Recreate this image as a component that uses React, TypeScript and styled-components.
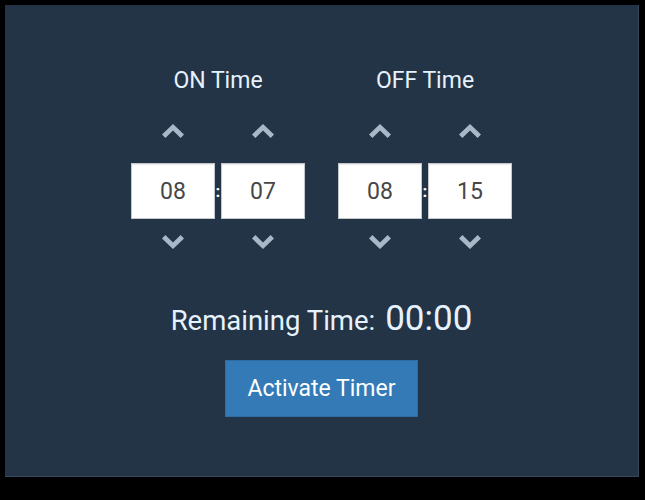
import * as React from 'react'
import styled, { createGlobalStyle } from 'styled-components'

const GlobalStyle = createGlobalStyle`
  html, body {
    margin: 0;
    padding: 0;
    background: #000;
  }
  body {
    font-family: Roboto, "Liberation Sans", Arial, sans-serif;
  }
`

const Panel = styled.div`
  margin: 5px 0 0 5px;
  width: 633px;
  height: 411px;
  padding-top: 60px;
  background: #233446;
  border-right: 1px solid #34475b;
  border-bottom: 1px solid #34475b;
  display: flex;
  flex-direction: column;
  align-items: center;
`

const Pickers = styled.div`
  display: flex;
  gap: 33px;
`

const Group = styled.div`
  display: flex;
  flex-direction: column;
  align-items: center;
`

const Title = styled.h2`
  margin: 0;
  font-size: 23px;
  font-weight: 400;
  line-height: 32px;
  color: #e6f2fd;
`

const Fields = styled.div`
  display: flex;
  margin-top: 27px;
`

const Unit = styled.div`
  display: flex;
  flex-direction: column;
  align-items: center;
  width: 84px;
`

const Arrow = styled.button<{ $down?: boolean }>`
  border: 0;
  padding: 0;
  background: none;
  width: 22px;
  height: 14px;
  cursor: pointer;
  margin-top: ${p => (p.$down ? '16px' : '0')};
  margin-bottom: ${p => (p.$down ? '0' : '25px')};
  svg {
    display: block;
  }
`

const Field = styled.div`
  width: 84px;
  height: 56px;
  box-sizing: border-box;
  background: #fff;
  border: 1px solid #c4c8cc;
  box-shadow: inset 0 1px 1px rgba(0, 0, 0, 0.08);
  display: flex;
  align-items: center;
  justify-content: center;
  font-size: 23px;
  color: #474747;
`

const Colon = styled.span`
  width: 6px;
  height: 56px;
  margin-top: 39px;
  display: flex;
  align-items: center;
  justify-content: center;
  color: #fff;
  font-size: 17px;
  font-weight: 700;
`

const Remaining = styled.div`
  margin-top: 50px;
  display: flex;
  align-items: baseline;
  gap: 10px;
  color: #e6f2fd;
  font-size: 27.5px;
  line-height: 40px;
`

const Clock = styled.span`
  font-size: 35px;
`

const ActivateButton = styled.button`
  margin-top: 19px;
  width: 193px;
  height: 57px;
  background: #337ab7;
  border: 1px solid #2e6da4;
  color: #fff;
  font-family: inherit;
  font-size: 23px;
  cursor: pointer;
`

function Chevron({ down }: { down?: boolean }) {
  return (
    <svg width="22" height="14" viewBox="0 0 22 14">
      <path
        d="M11 0 L22 10.5 L18.6 14 L11 6.6 L3.4 14 L0 10.5 Z"
        fill="#a9b8c8"
        transform={down ? 'rotate(180 11 7)' : undefined}
      />
    </svg>
  )
}

function TimeUnit({ value }: { value: string }) {
  return (
    <Unit>
      <Arrow aria-label="increase">
        <Chevron />
      </Arrow>
      <Field>{value}</Field>
      <Arrow $down aria-label="decrease">
        <Chevron down />
      </Arrow>
    </Unit>
  )
}

function TimePicker({ title, hours, minutes }: { title: string; hours: string; minutes: string }) {
  return (
    <Group>
      <Title>{title}</Title>
      <Fields>
        <TimeUnit value={hours} />
        <Colon>:</Colon>
        <TimeUnit value={minutes} />
      </Fields>
    </Group>
  )
}

export default function App() {
  return (
    <>
      <GlobalStyle />
      <Panel>
        <Pickers>
          <TimePicker title="ON Time" hours="08" minutes="07" />
          <TimePicker title="OFF Time" hours="08" minutes="15" />
        </Pickers>
        <Remaining>
          Remaining Time:<Clock>00:00</Clock>
        </Remaining>
        <ActivateButton>Activate Timer</ActivateButton>
      </Panel>
    </>
  )
}
